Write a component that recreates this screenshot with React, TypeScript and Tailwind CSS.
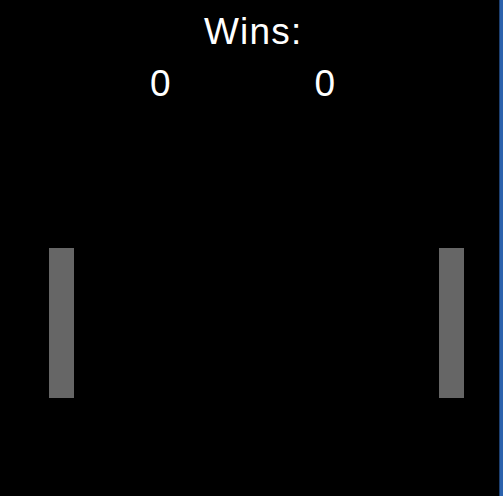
import React from 'react'

const FONT = { fontFamily: '"Liberation Sans", Arial, sans-serif' }

function Paddle(): React.ReactElement {
  return <div className="w-[25px] h-[150px] bg-[#666666]" />
}

export default function App(): React.ReactElement {
  const scores = [0, 0]

  return (
    <div className="flex w-full h-[496px] bg-black overflow-hidden" style={FONT}>
      <div className="flex-1 flex flex-col">
        {/* Score board */}
        <div className="h-[248px] pt-[13px]">
          <div className="pl-[204px] text-white text-[37px] leading-none tracking-[1.2px]">Wins:</div>
          <div className="flex gap-[144px] pl-[150px] mt-[15px] text-white text-[37px] leading-none">
            {scores.map((s, i) => (
              <span key={i}>{s}</span>
            ))}
          </div>
        </div>

        {/* Paddles */}
        <div className="flex justify-between pl-[49px] pr-[35px]">
          <Paddle />
          <Paddle />
        </div>
      </div>
      <div className="w-[4px] h-full flex">
        <div className="w-px bg-[#1d3f6f]" />
        <div className="flex-1 bg-[#2b62ad]" />
      </div>
    </div>
  )
}
